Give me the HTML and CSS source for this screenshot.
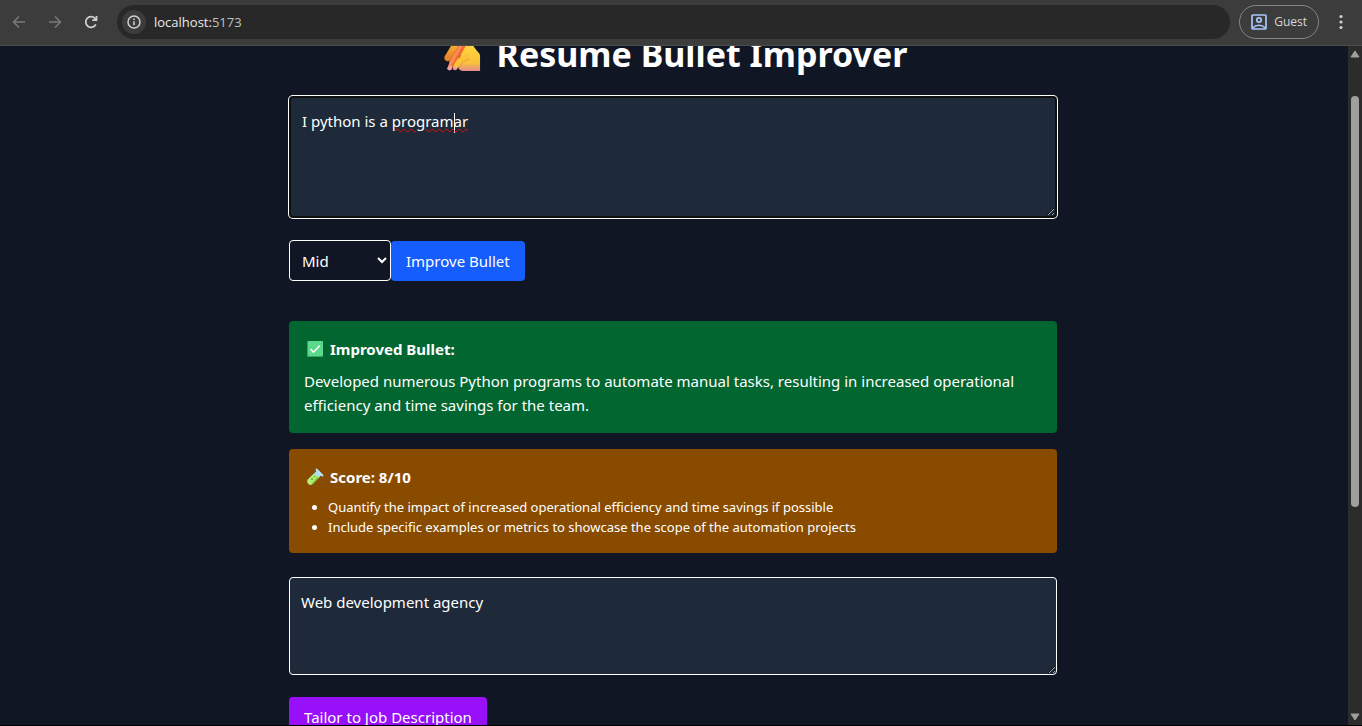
FILE: index.html
```html
<!DOCTYPE html>
<html lang="en">
<head>
<meta charset="utf-8">
<meta name="viewport" content="width=device-width, initial-scale=1">
<title>Resume Bullet Improver</title>
<link rel="stylesheet" href="styles.css">
</head>
<body>
<header class="toolbar">
  <nav class="nav-buttons" aria-label="Browser navigation">
    <button class="icon-button dim" type="button" aria-label="Back">
      <svg viewBox="0 0 16 16" class="icon"><path d="M14 8H3M8 2.500 2.500 8 8 13.500"/></svg>
    </button>
    <button class="icon-button dim" type="button" aria-label="Forward">
      <svg viewBox="0 0 16 16" class="icon"><path d="M2 8h11M8 2.500 13.500 8 8 13.500"/></svg>
    </button>
    <button class="icon-button" type="button" aria-label="Reload">
      <svg viewBox="0 0 16 16" class="icon reload"><path d="M12.800 10.300A5.300 5.300 0 1 1 12 4.500l1.300 1.400M13.500 2v4.200H9.300"/></svg>
    </button>
  </nav>
  <div class="address">
    <button class="site-info" type="button" aria-label="Site information">
      <svg viewBox="0 0 16 16" class="icon"><circle cx="8" cy="8" r="6"/><path d="M8 7.300v4M8 4.600v1.500"/></svg>
    </button>
    <span class="url">localhost:<span class="port">5173</span></span>
  </div>
  <button class="profile" type="button">
    <svg viewBox="0 0 16 16" class="profile-icon"><rect x="1" y="1" width="14" height="14" rx="1"/><circle cx="8" cy="6" r="2.200"/><path d="M2 13.800c3-3.400 9-3.400 12 0"/></svg>
    Guest
  </button>
  <button class="menu" type="button" aria-label="Menu">
    <svg viewBox="0 0 4 16" class="dots"><circle cx="2" cy="2.500" r="1.600"/><circle cx="2" cy="8" r="1.600"/><circle cx="2" cy="13.500" r="1.600"/></svg>
  </button>
</header>
<div class="viewport">
  <main class="page">
    <div class="column">
      <h1 class="title">
        <svg class="hand" viewBox="0 0 40 40" aria-hidden="true">
          <defs>
            <linearGradient id="palm" x1="0" y1="0" x2="0" y2="1"><stop offset="0" stop-color="#ffd83f"/><stop offset=".7" stop-color="#fbc23a"/><stop offset="1" stop-color="#e48a90"/></linearGradient>
            <linearGradient id="finger" x1="0" y1="0" x2="0" y2="1"><stop offset="0" stop-color="#f9b233"/><stop offset="1" stop-color="#e8832c"/></linearGradient>
          </defs>
          <path d="M14 9 5 24" stroke="url(#finger)" stroke-width="7" stroke-linecap="round"/>
          <path d="M17 17 10 28" stroke="#e8832c" stroke-width="6" stroke-linecap="round"/>
          <path fill="url(#palm)" d="M20 15c3-8 9-8 13-2 2 4 6 6 6 9v16H22c-4 0-7-3-6-7z"/>
          <path fill="#f06a32" d="m20 6 6 2-13 23-6 5-2-1 2-7z"/>
          <path fill="#ff8a50" d="m20 6 3 1L9 32l-4 3 2-7z"/>
          <path fill="#f2a0a0" d="M5 34c2-3 5-2 5 0s-2 4-4 3-2-2-1-3z"/>
          <path d="M26 23c-5 0-8 2-11 7l-2 4" fill="none" stroke="#fcc33a" stroke-width="5" stroke-linecap="round" stroke-linejoin="round"/>
          <path d="M28 26c-6 0-8 3-11 8" fill="none" stroke="#e99a35" stroke-width="1"/>
          <path fill="#ee9d92" d="M11 34c2-1 4 0 4 2l-2 1c-2 0-3-1-2-3z"/>
        </svg>
        Resume Bullet Improver
      </h1>
      <div class="editor">
        <textarea class="field focused" rows="4" spellcheck="false" aria-label="Resume bullet">I python is a programar</textarea>
        <div class="marks" aria-hidden="true">I python is a <span class="misspelled">program<i class="caret"></i>ar</span></div>
      </div>
      <div class="controls">
        <select class="level" aria-label="Experience level"><option>Junior</option><option selected>Mid</option><option>Senior</option></select>
        <button class="action improve" type="button">Improve Bullet</button>
      </div>
      <section class="card result">
        <h2 class="card-title">
          <svg class="emoji" viewBox="0 0 18 18" aria-hidden="true"><rect x="1" y="1" width="16" height="16" rx="1" fill="#36a667"/><rect x="2" y="1" width="15" height="15" rx="1" fill="#5bd88b"/><path d="m4.500 9 3 3.200L13.800 5.500" fill="none" stroke="#fff" stroke-width="1.500"/></svg>
          Improved Bullet:
        </h2>
        <p class="card-text">Developed numerous Python programs to automate manual tasks, resulting in increased operational efficiency and time savings for the team.</p>
      </section>
      <section class="card score">
        <h2 class="card-title">
          <svg class="emoji" viewBox="0 0 18 18" aria-hidden="true"><path fill="#a9dcf5" d="m11 2.500 4.500 4.500-9 9c-3 2-6.500-1-4.500-4.500z"/><path fill="#b5ef70" d="m7.500 6 6 3-7 7c-3 2-6.500-1-4.500-4.500z"/><path fill="#7fcf50" d="m11 9 2.500 0-7 7-2 .5z"/><path d="m10.500 1.500 6 6" stroke="#b9e8fb" stroke-width="1.800" stroke-linecap="round"/><circle cx="6" cy="11" r="1" fill="#5ca83f"/><circle cx="8.500" cy="8.500" r=".8" fill="#5ca83f"/></svg>
          Score: 8/10
        </h2>
        <ul class="tips">
          <li>Quantify the impact of increased operational efficiency and time savings if possible</li>
          <li>Include specific examples or metrics to showcase the scope of the automation projects</li>
        </ul>
      </section>
      <textarea class="field job" rows="3" spellcheck="false" aria-label="Job description">Web development agency</textarea>
      <button class="action tailor" type="button">Tailor to Job Description</button>
    </div>
  </main>
  <div class="scrollbar" aria-hidden="true">
    <svg class="arrow" viewBox="0 0 10 8"><path d="M5 1 9 7H1z"/></svg>
    <div class="track"><div class="thumb"></div></div>
    <svg class="arrow" viewBox="0 0 10 8"><path d="M5 7 9 1H1z"/></svg>
  </div>
</div>
</body>
</html>
```
FILE: styles.css
```css
* { box-sizing: border-box; }

body {
  margin: 0;
  height: 100vh;
  display: flex;
  flex-direction: column;
  overflow: hidden;
  background: #101624;
  color: #fff;
  font: 15px/24px "Noto Sans", "Open Sans", sans-serif;
}

button, select, textarea { font: inherit; color: inherit; }

button { border: 0; padding: 0; background: none; }

.toolbar {
  display: flex;
  align-items: center;
  flex: none;
  height: 46px;
  padding: 0 14px 2px 11px;
  background: #3c3c3c;
  border-bottom: 1px solid #4a4c4c;
  font-family: "Open Sans", sans-serif;
}

.nav-buttons { display: flex; gap: 20px; margin-right: 18px; }

.icon-button, .site-info, .menu { display: flex; align-items: center; justify-content: center; }

.icon {
  width: 16px;
  height: 16px;
  fill: none;
  stroke: #d0d0d0;
  stroke-width: 1.5;
}

.dim .icon { stroke: #7b7b7b; }

.reload { stroke-width: 1.8; }

.address {
  flex: 1;
  display: flex;
  align-items: center;
  gap: 8px;
  height: 34px;
  padding-left: 5px;
  border-radius: 17px;
  background: #282828;
}

.site-info { width: 24px; height: 24px; border-radius: 50%; background: #3c3c3c; }

.url { font-size: 13px; color: #e8e8e8; }

.port { color: #c0c0c0; }

.profile {
  display: flex;
  align-items: center;
  gap: 7px;
  height: 34px;
  margin-left: 9px;
  padding: 0 11px;
  border: 1px solid #858585;
  border-radius: 17px;
  font-size: 12px;
  line-height: 16px;
  color: #d5d5d5;
}

.profile-icon { width: 16px; height: 16px; fill: none; stroke: #a8c7fa; stroke-width: 1.7; }

.menu { width: 14px; margin-left: 15px; }

.dots { width: 4px; height: 16px; fill: #d0d0d0; }

.viewport {
  flex: 1;
  min-height: 0;
  display: flex;
  border-bottom: 1px solid #000;
}

.page { flex: 1; min-width: 0; overflow: hidden; padding: 0 16px; }

.column { max-width: 768px; margin: -12px auto 0; }

.title {
  display: flex;
  align-items: center;
  justify-content: center;
  gap: 16px;
  margin: 0 0 22px;
  padding-left: 4px;
  font-size: 34px;
  line-height: 40px;
  font-weight: 700;
}

.hand { width: 38px; height: 38px; }

.editor { position: relative; }

.field {
  display: block;
  width: 100%;
  padding: 12px 11px;
  border: 1px solid #fff;
  border-radius: 4px;
  background: #1e2939;
  resize: vertical;
}

.focused {
  outline: 0;
  border: 2px solid #101010;
  box-shadow: 0 0 0 1px #fff;
  padding: 11px;
}

.marks {
  position: absolute;
  inset: 13px 13px auto;
  color: transparent;
  pointer-events: none;
}

.misspelled { text-decoration: underline wavy #e01010 1px; }

.caret {
  display: inline-block;
  width: 1px;
  height: 20px;
  margin-right: -1px;
  background: #fff;
  vertical-align: middle;
}

.controls { display: flex; align-items: center; margin: 22px 0 40px; }

.level {
  width: 102px;
  height: 41px;
  padding: 0 8px;
  border: 1px solid #fff;
  border-radius: 4px;
  background: #101624;
}

.action { height: 40px; padding: 0 15px; border-radius: 4px; white-space: nowrap; }

.improve { background: #155dfc; }

.tailor { background: #9810fa; }

.card { padding: 16px 15px; border-radius: 4px; }

.result { background: #016630; }

.score { margin: 16px 0 24px; background: #894b00; }

.card-title {
  display: flex;
  align-items: center;
  gap: 6px;
  margin: 0 0 8px;
  padding-left: 2px;
  font-size: 15px;
  line-height: 24px;
  font-weight: 700;
}

.emoji { width: 18px; height: 18px; }

.card-text { margin: 0; }

.tips { margin: 0; padding-left: 24px; font-size: 13px; line-height: 20px; }

.job { margin-bottom: 22px; }

.scrollbar {
  flex: none;
  display: flex;
  flex-direction: column;
  align-items: center;
  gap: 4px;
  width: 14px;
  margin-left: 2px;
  padding: 4px 0;
  background: #2c2c2c;
}

.arrow { width: 10px; height: 8px; fill: #9f9f9f; stroke: #9f9f9f; stroke-linejoin: round; }

.track { flex: 1; width: 8px; padding-top: 34px; }

.thumb { height: 67%; border-radius: 4px; background: #9f9f9f; }
```
